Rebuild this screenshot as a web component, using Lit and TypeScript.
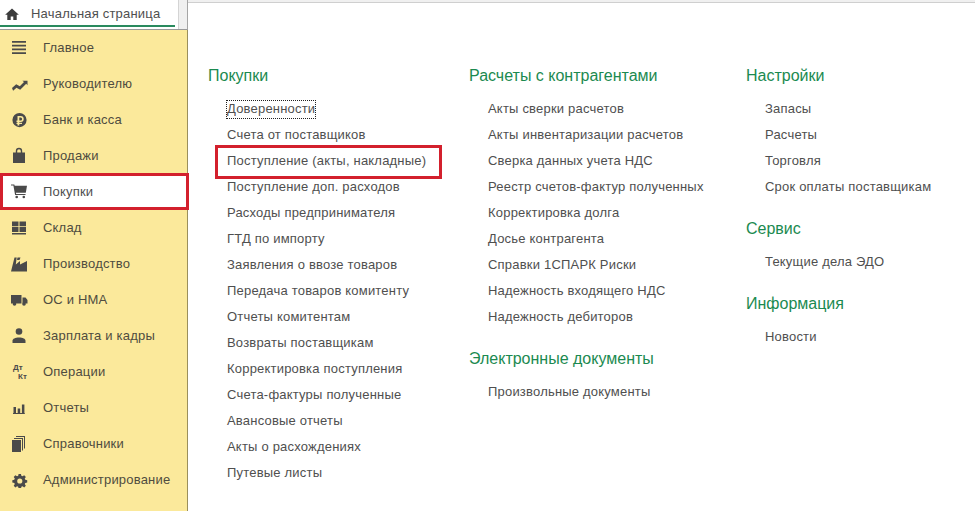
import { LitElement, html, css, svg } from "lit";
import { customElement } from "lit/decorators.js";

const icons: Record<string, unknown> = {
  menu: svg`<path d="M2 3h14v1.800H2zM2 6.700h14v1.800H2zM2 10.400h14v1.800H2zM2 14.200h14V16H2z"/>`,
  trend: svg`<path d="M2 14l4.200-3.700 3.600 2 4.200-4.300-1.600-1.200H17.500v4.500l-1.300-1.500-6 6-3.700-2.100-3.400 3z"/>`,
  rub: svg`<path fill-rule="evenodd" d="M9.500 3a7.100 7.100 0 1 1 0 14.200A7.100 7.100 0 0 1 9.500 3zM7.500 6v4.500H6.500V12h1v.8h-1V14h1v1.500h1.800V14H12v-1.200H9.300V12h1.400a3 3 0 0 0 0-6zM9.300 7.500h1.300a1.500 1.500 0 0 1 0 3H9.300z"/>`,
  bag: svg`<path fill-rule="evenodd" d="M3 6.500h2.800V5a3.200 3.200 0 0 1 6.400 0v1.500H15V17H3zM7.200 6.500h3.600V5a1.800 1.800 0 0 0-3.600 0z"/>`,
  cart: svg`<path d="M1 2.500h3.300l.4 1.300H17l-1.200 7H5.900l.3 1.200h9.300v1.100H5.100L3.400 3.600H1z"/><circle cx="6.700" cy="15" r="1.300"/><circle cx="13.800" cy="15" r="1.300"/>`,
  store: svg`<path d="M2 3.500h6.500v4.700H2zM9.500 3.500H16v4.700H9.500zM2 9h6.500v5H2zM9.500 9H16v5H9.500zM2 15h14v1.500H2z"/>`,
  factory: svg`<path d="M1 17.500L4.500 3.500h2.200l-.9 7L10 7v3.500L17 7v10.500z"/><path d="M7.500 3.500h3L9.500 6H7z"/>`,
  truck: svg`<path d="M1 5h10.500v8.500H1zM12.500 7.500h3l2 2.500v3.500h-5z"/><circle cx="4.500" cy="14" r="1.800"/><circle cx="14" cy="14" r="1.800"/>`,
  person: svg`<circle cx="9" cy="5.500" r="3.300"/><path d="M2.500 17v-2.200c0-2 2.700-3.300 6.500-3.300s6.500 1.300 6.500 3.300V17z"/>`,
  chart: svg`<path d="M3.500 9h2.500v6H3.500zM7.700 10.500h2.500V15H7.700zM11.900 6.500h2.500V15h-2.500zM3 15h11.800v1H3z"/>`,
  book: svg`<path d="M2 6h9v12H2z"/><path d="M4 4h9v12.500h-1V5H4zM6 2h9v12.500h-1V3H6z"/>`,
  gear: svg`<g transform="translate(1.500 2.500) scale(.92)"><path fill-rule="evenodd" d="M7.700 1.500h2.600l.4 2.100 1.300.6 1.800-1.200 1.800 1.800-1.200 1.800.6 1.300 2.100.4v2.600l-2.100.4-.6 1.300 1.200 1.800-1.800 1.800-1.800-1.200-1.300.6-.4 2.100H7.700l-.4-2.100-1.300-.6-1.800 1.200-1.800-1.800 1.200-1.800-.6-1.300-2.100-.4V8.300l2.100-.4.6-1.300-1.200-1.800 1.800-1.800 1.800 1.200 1.300-.6zM9 6.400a2.800 2.800 0 1 0 0 5.600 2.800 2.800 0 0 0 0-5.600z"/></g>`,
};

const nav: [string, string][] = [
  ["menu", "Главное"], ["trend", "Руководителю"], ["rub", "Банк и касса"], ["bag", "Продажи"],
  ["cart", "Покупки"], ["store", "Склад"], ["factory", "Производство"], ["truck", "ОС и НМА"],
  ["person", "Зарплата и кадры"], ["dtkt", "Операции"], ["chart", "Отчеты"], ["book", "Справочники"],
  ["gear", "Администрирование"],
];

const columns: { width: number; groups: [string, string[]][] }[] = [
  { width: 261, groups: [["Покупки", ["Доверенности", "Счета от поставщиков", "Поступление (акты, накладные)", "Поступление доп. расходов", "Расходы предпринимателя", "ГТД по импорту", "Заявления о ввозе товаров", "Передача товаров комитенту", "Отчеты комитентам", "Возвраты поставщикам", "Корректировка поступления", "Счета-фактуры полученные", "Авансовые отчеты", "Акты о расхождениях", "Путевые листы"]]] },
  { width: 277, groups: [["Расчеты с контрагентами", ["Акты сверки расчетов", "Акты инвентаризации расчетов", "Сверка данных учета НДС", "Реестр счетов-фактур полученных", "Корректировка долга", "Досье контрагента", "Справки 1СПАРК Риски", "Надежность входящего НДС", "Надежность дебиторов"]], ["Электронные документы", ["Произвольные документы"]]] },
  { width: 220, groups: [["Настройки", ["Запасы", "Расчеты", "Торговля", "Срок оплаты поставщикам"]], ["Сервис", ["Текущие дела ЭДО"]], ["Информация", ["Новости"]]] },
];

@customElement("app-root")
export class AppRoot extends LitElement {
  static styles = css`
    :host { display: flex; width: 975px; height: 511px; position: relative; overflow: hidden; background: #f0f0f0;
      font-family: "Liberation Sans", Arial, sans-serif; font-size: 13px; color: #4f4f4f; letter-spacing: .2px; }
    .left { width: 188px; flex: none; display: flex; flex-direction: column; }
    .top { display: flex; height: 30px; flex: none; background: #f0f0f0; border-bottom: 1px solid #9a9a9a; border-right: 1px solid #a5a5a5; box-sizing: border-box; }
    .tab { width: 179px; background: #fff; border-right: 1px solid #d4d4d4; box-sizing: border-box; }
    .tab-in { width: 175px; height: 27px; box-sizing: border-box; display: flex; align-items: center; padding: 1px 0 0 5px; gap: 12px; border-bottom: 2px solid #2a8a5e; }
    .home { width: 14px; height: 12px; margin-top: 2px; fill: #3c3c3c; flex: none; }
    .side { flex: 1; box-sizing: border-box; background: #fbe99b; border-right: 1px solid #9a8f5c; }
    .nav { height: 36px; display: flex; align-items: center; box-sizing: border-box; padding: 0 0 2px 10px; gap: 15px; color: #4f4c40; }
    .nav.on { background: #fff; color: #4f4f4f; }
    .nav svg { width: 18px; height: 18px; fill: #4a4a4a; flex: none; }
    .dk { width: 18px; height: 18px; box-sizing: border-box; padding-top: 2px; flex: none; font-size: 8px; font-weight: bold; line-height: 8px; letter-spacing: 0; color: #4a4a4a; display: flex; flex-direction: column; }
    .dk span:first-child { padding-left: 3px; }
    .dk span:last-child { padding: 1px 0 0 8px; }
    .main { flex: 1; background: #fff; margin-top: 2px; border-top: 1px solid #cfcfcf; display: flex; padding: 63px 0 0 20px; }
    .col { flex: none; }
    h2 { margin: 0 0 10px; font-size: 16px; line-height: 20px; font-weight: normal; color: #1b8a50; letter-spacing: 0; }
    .links + h2 { margin-top: 19px; }
    .link { height: 26px; line-height: 26px; padding-left: 19px; white-space: nowrap; }
    .focus { outline: 1px dotted #222; padding: 0 0 2px; }
    .mark { position: absolute; border: 3px solid #d3202d; box-sizing: border-box; pointer-events: none; }
    .mark.a { left: 0; top: 173px; width: 189px; height: 37px; }
    .mark.b { left: 215px; top: 145px; width: 227px; height: 34px; }
  `;

  render() {
    return html`
      <div class="left">
        <div class="top">
          <div class="tab"><div class="tab-in">
            <svg class="home" viewBox="0 0 16 14"><path d="M8 .5L0 8h2.500v6H6.500v-4h3v4h4V8H16z"/></svg>
            <span>Начальная страница</span>
          </div></div>
        </div>
        <div class="side">
          ${nav.map(([ic, t]) => html`<div class="nav ${t === "Покупки" ? "on" : ""}">
            ${ic === "dtkt"
              ? html`<div class="dk"><span>Дт</span><span>Кт</span></div>`
              : html`<svg viewBox="0 0 18 18">${icons[ic]}</svg>`}
            <span>${t}</span></div>`)}
        </div>
      </div>
      <div class="main">
        ${columns.map((c) => html`<div class="col" style="width:${c.width}px">
          ${c.groups.map(([h, ls]) => html`<h2>${h}</h2><div class="links">
            ${ls.map((l) => html`<div class="link"><span class=${l === "Доверенности" ? "focus" : ""}>${l}</span></div>`)}
          </div>`)}
        </div>`)}
      </div>
      <div class="mark a"></div>
      <div class="mark b"></div>
    `;
  }
}
